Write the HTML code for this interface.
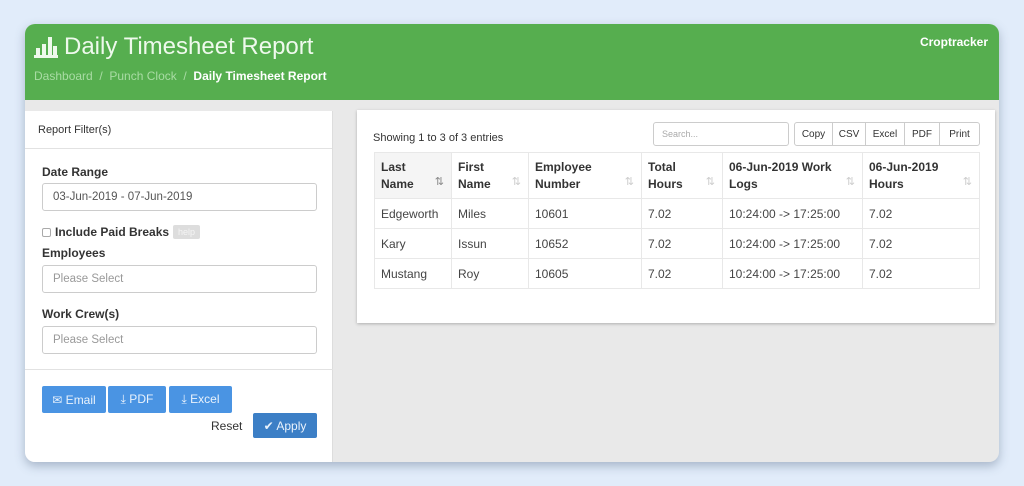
<!DOCTYPE html>
<html><head><meta charset="utf-8"><style>
*{box-sizing:border-box;margin:0;padding:0}
body{width:1024px;height:486px;background:#e1ecfa;font-family:"Liberation Sans",sans-serif;position:relative;overflow:hidden;color:#333}
.card{position:absolute;left:25px;top:24px;width:974px;height:438px;border-radius:10px;background:#e9e9e9;overflow:hidden;box-shadow:0 4px 10px rgba(60,80,110,.35)}
.hdr{position:absolute;left:0;top:0;width:974px;height:76px;background:#56ae4f}
.title{position:absolute;left:9px;top:9px;color:#eef9ec;font-size:24px;display:flex;align-items:center;gap:6px}
.bc{position:absolute;left:9px;top:45px;font-size:12px;color:#a9dca4}
.bc b{color:#fff}
.brand{position:absolute;right:11px;top:11px;color:#fff;font-weight:bold;font-size:12px}
.left{position:absolute;left:0;top:87px;width:308px;height:351px;background:#fff;border-right:1px solid #ddd}
.lh{height:38px;border-bottom:1px solid #e2e2e2;padding:13px 13px;font-size:11px}
.lbl{position:absolute;left:17px;font-weight:bold;font-size:12px}
.inp{position:absolute;left:17px;width:275px;height:28px;border:1px solid #ccc;border-radius:3px;font-size:11.5px;padding:7px 10px;color:#555}
.ph{color:#999}
.btn{position:absolute;height:27px;background:#4a94e3;color:#e9f2fc;font-size:12px;border-radius:2px;display:flex;align-items:center;justify-content:center;gap:4px}
.right{position:absolute;left:332px;top:86px;width:638px;height:213px;background:#fff;box-shadow:0 1px 3px rgba(0,0,0,.25)}
table{position:absolute;left:17px;top:42px;border-collapse:collapse;font-size:12px;color:#444}
td,th{border:1px solid #e8e8e8;padding:0 6px;text-align:left;vertical-align:middle}
th{font-weight:bold;font-size:12px;line-height:17px;height:46px;position:relative;color:#333}
th span{position:absolute;right:7px;bottom:7px;color:#ccc;font-weight:normal;font-size:11px}
td{height:30px}
.dt{position:absolute;top:12px;height:24px;border:1px solid #ccc;font-size:10px;display:flex;align-items:center}
.dt span{height:22px;display:flex;align-items:center;justify-content:center}
</style></head><body>
<div class="card">
 <div class="hdr">
  <div class="title"><svg width="24" height="22" viewBox="0 0 24 22"><rect x="0" y="19" width="24" height="3" fill="#eef9ec"/><rect x="2" y="12" width="4" height="7" fill="#eef9ec"/><rect x="8" y="8" width="4" height="11" fill="#eef9ec"/><rect x="14" y="1" width="4" height="18" fill="#eef9ec"/><rect x="19" y="10" width="4" height="9" fill="#eef9ec"/></svg>Daily Timesheet Report</div>
  <div class="bc">Dashboard &nbsp;/&nbsp; Punch Clock &nbsp;/&nbsp; <b>Daily Timesheet Report</b></div>
  <div class="brand">Croptracker</div>
 </div>
 <div class="left">
  <div class="lh">Report Filter(s)</div>
  <div class="lbl" style="top:54px">Date Range</div>
  <div class="inp" style="top:72px">03-Jun-2019 - 07-Jun-2019</div>
  <div class="lbl" style="top:114px;left:17px;display:flex;align-items:center;gap:4px"><span style="width:9px;height:9px;border:1px solid #aaa;border-radius:2px;display:inline-block"></span>Include Paid Breaks <span style="background:#ddd;color:#f5f5f5;font-size:9px;padding:2px 5px;border-radius:2px;font-weight:normal">help</span></div>
  <div class="lbl" style="top:135px">Employees</div>
  <div class="inp ph" style="top:154px">Please Select</div>
  <div class="lbl" style="top:196px">Work Crew(s)</div>
  <div class="inp ph" style="top:215px">Please Select</div>
  <div style="position:absolute;left:0;top:258px;width:308px;border-top:1px solid #e2e2e2"></div>
  <div class="btn" style="left:17px;top:275px;width:64px">✉ Email</div>
  <div class="btn" style="left:83px;top:275px;width:58px">⤓ PDF</div>
  <div class="btn" style="left:144px;top:275px;width:63px">⤓ Excel</div>
  <div style="position:absolute;left:186px;top:308px;font-size:12px">Reset</div>
  <div class="btn" style="left:228px;top:302px;width:64px;height:25px;background:#3c7fc6">✔ Apply</div>
 </div>
 <div class="right">
  <div style="position:absolute;left:16px;top:22px;font-size:11px">Showing 1 to 3 of 3 entries</div>
  <div class="dt" style="left:296px;width:136px;border-radius:3px;padding-left:8px;color:#aaa;font-size:9px">Search...</div>
  <div class="dt" style="left:437px;width:186px;border-radius:3px">
   <span style="width:38px;border-right:1px solid #ccc">Copy</span><span style="width:33px;border-right:1px solid #ccc">CSV</span><span style="width:39px;border-right:1px solid #ccc">Excel</span><span style="width:35px;border-right:1px solid #ccc">PDF</span><span style="width:39px">Print</span></div>
  <table>
   <tr><th style="width:77px;background:#f5f5f5">Last<br>Name<span style="color:#888">⇅</span></th><th style="width:77px">First<br>Name<span>⇅</span></th><th style="width:113px">Employee<br>Number<span>⇅</span></th><th style="width:81px">Total<br>Hours<span>⇅</span></th><th style="width:140px">06-Jun-2019 Work<br>Logs<span>⇅</span></th><th style="width:117px">06-Jun-2019<br>Hours<span>⇅</span></th></tr>
   <tr><td>Edgeworth</td><td>Miles</td><td>10601</td><td>7.02</td><td>10:24:00 -&gt; 17:25:00</td><td>7.02</td></tr>
   <tr><td>Kary</td><td>Issun</td><td>10652</td><td>7.02</td><td>10:24:00 -&gt; 17:25:00</td><td>7.02</td></tr>
   <tr><td>Mustang</td><td>Roy</td><td>10605</td><td>7.02</td><td>10:24:00 -&gt; 17:25:00</td><td>7.02</td></tr>
  </table>
 </div>
</div>
</body></html>
